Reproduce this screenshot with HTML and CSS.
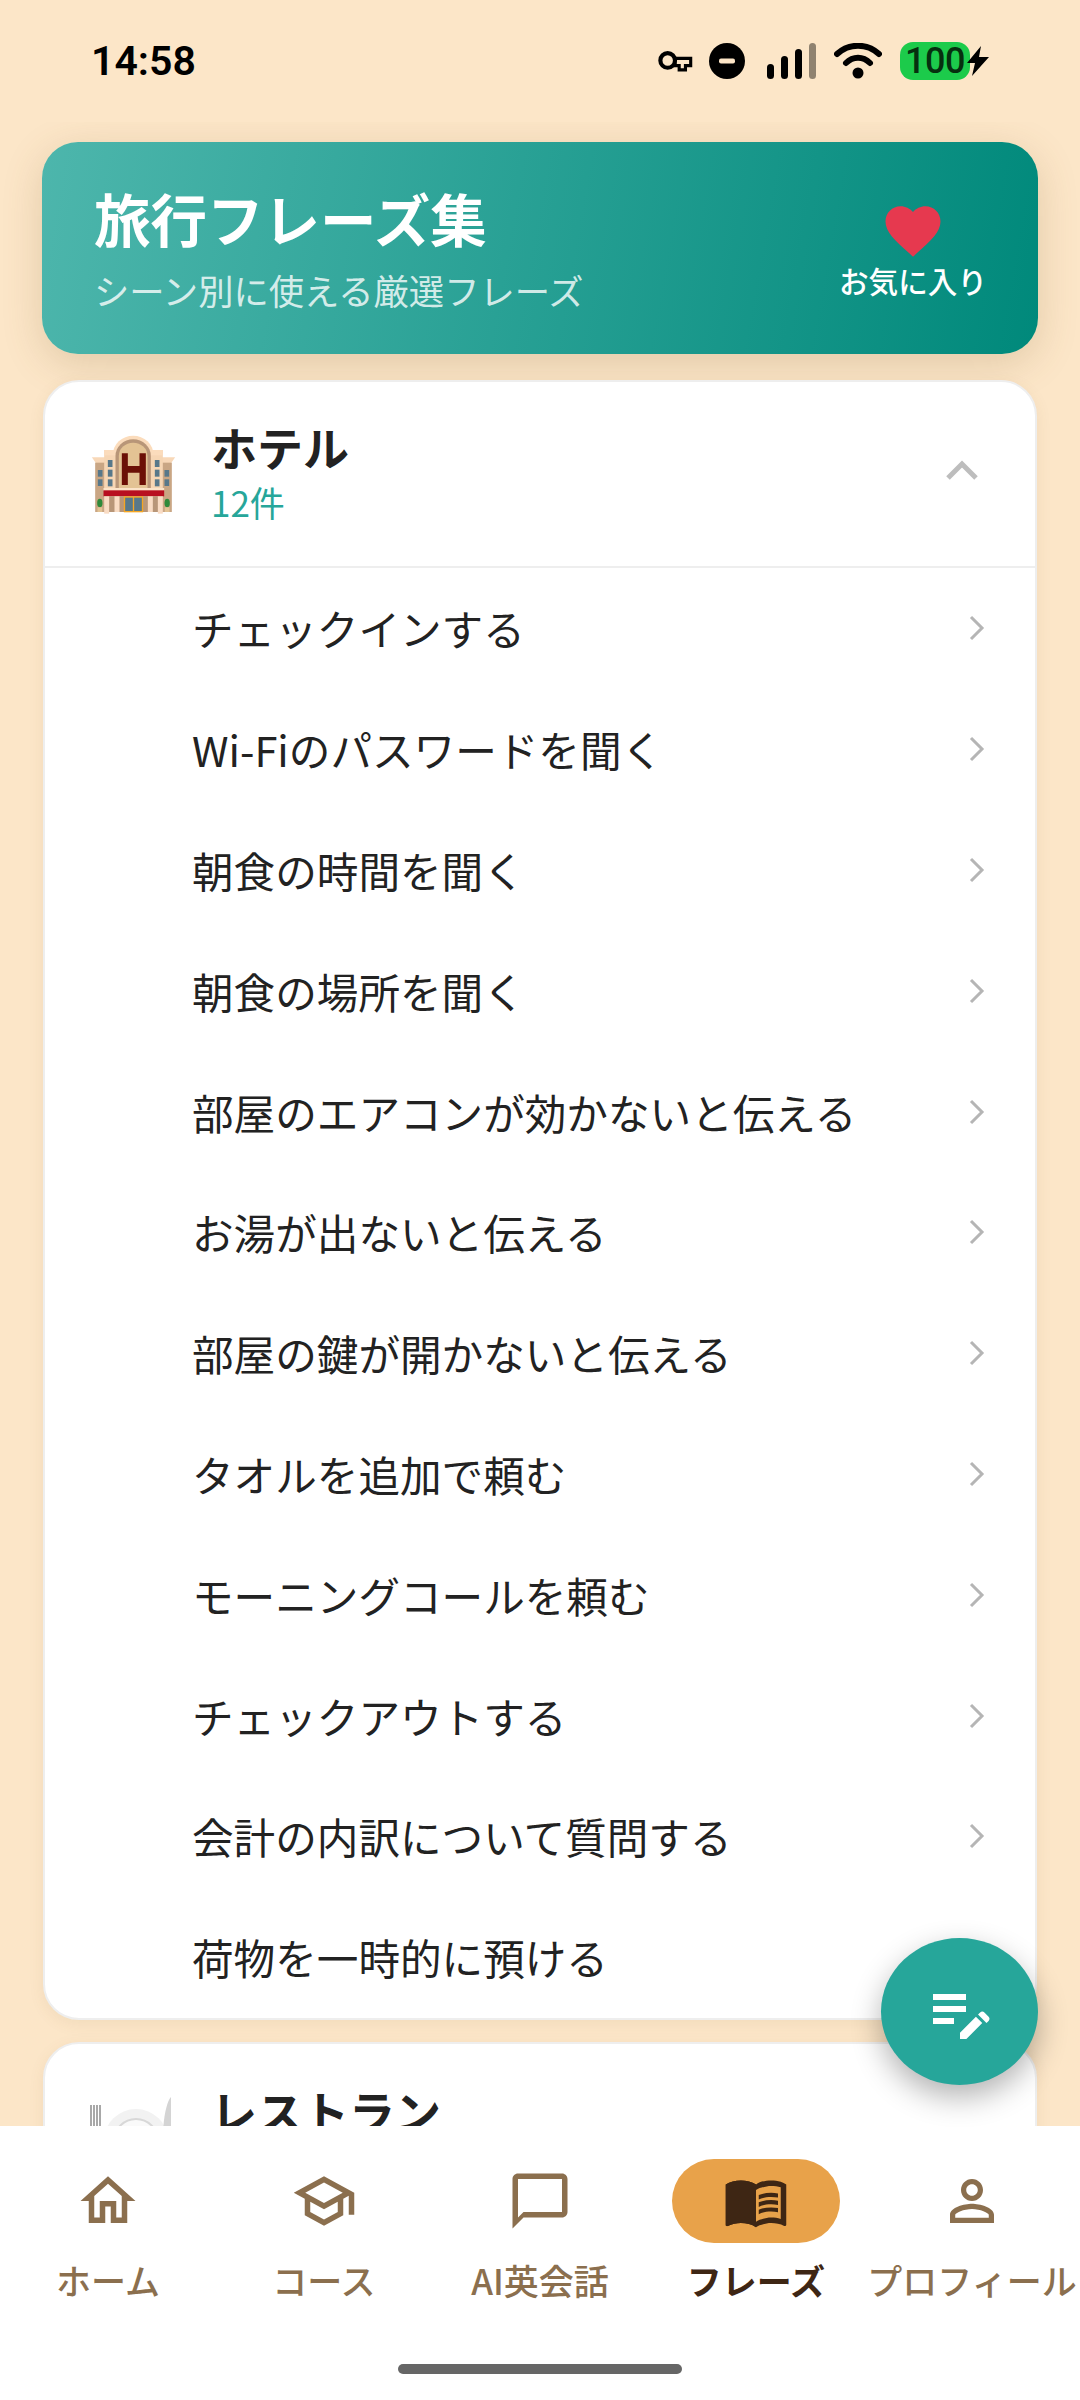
FILE: index.html
```html
<!DOCTYPE html>
<html lang="ja">
<head>
  <meta charset="utf-8">
  <title>旅行フレーズ集</title>
  <link rel="stylesheet" href="styles.css">
</head>
<body>
<div class="app">

  <div class="status-bar">
    <span class="clock">14:58</span>
    <div class="status-icons">
      <svg class="st-key" viewBox="0 0 34 22" width="36" height="23"><circle cx="10" cy="10" r="7" fill="none" stroke="#000" stroke-width="4"/><path d="M17 8h15v7h-5v4h-6v-4h-4z" fill="none" stroke="#000" stroke-width="3"/></svg>
      <svg class="st-dnd" viewBox="0 0 36 36" width="36" height="36"><circle cx="18" cy="18" r="18" fill="#000"/><rect x="10" y="15.5" width="16" height="5" rx="2" fill="#fde6c8"/></svg>
      <svg class="st-signal" viewBox="0 0 49 36" width="49" height="36"><rect x="0" y="21" width="7" height="15" rx="3.5" fill="#000"/><rect x="14" y="13" width="7" height="23" rx="3.5" fill="#000"/><rect x="28" y="6" width="7" height="30" rx="3.5" fill="#000"/><rect x="42" y="0" width="7" height="36" rx="3.5" fill="#8f8270"/></svg>
      <svg class="st-wifi" viewBox="0 0 48 36" width="48" height="36"><path d="M3 11C15 0 33 0 45 11" fill="none" stroke="#000" stroke-width="6" stroke-linecap="round"/><path d="M12 20C19 13 29 13 36 20" fill="none" stroke="#000" stroke-width="6" stroke-linecap="round"/><circle cx="24" cy="30" r="5.5" fill="#000"/></svg>
      <div class="battery">
        <span class="battery-level">100</span>
        <svg class="st-bolt" viewBox="0 0 24 30" width="24" height="30"><path d="M15 0L1 17h8l-3 13 17-19h-10z" fill="#000"/></svg>
      </div>
    </div>
  </div>

  <main class="content">
    <section class="banner">
      <div>
        <h1 class="banner-title">旅行フレーズ集</h1>
        <p class="banner-sub">シーン別に使える厳選フレーズ</p>
      </div>
      <div class="favorite">
        <svg viewBox="0 0 24 24" width="66" height="66"><path d="M12 21.35l-1.45-1.32C5.4 15.36 2 12.28 2 8.5 2 5.42 4.42 3 7.5 3c1.74 0 3.41.81 4.5 2.09C13.09 3.81 14.76 3 16.5 3 19.58 3 22 5.42 22 8.5c0 3.78-3.4 6.86-8.55 11.54L12 21.35z" fill="#e6394f"/></svg>
        <span>お気に入り</span>
      </div>
    </section>

    <section class="card">
      <div class="card-head">
        <svg class="emoji" viewBox="90 75 260 240" width="87" height="80">
          <path d="M95 142h40v20h-26z" fill="#f8d8b8"/>
          <path d="M345 142h-40v20h26z" fill="#f8d8b8"/>
          <rect x="105" y="158" width="30" height="148" fill="#c9a684"/>
          <rect x="305" y="158" width="30" height="148" fill="#c9a684"/>
          <rect x="132" y="120" width="176" height="186" fill="#f6d6b4"/>
          <path d="M158 135a61 58 0 0 1 122 0z" fill="#fbdcbc"/>
          <rect x="132" y="120" width="176" height="16" fill="#fbdcbc"/>
          <path d="M166 236V138a53 50 0 0 1 106 0V236z" fill="#b89678"/>
          <path d="M176 236V138a43 40 0 0 1 86 0V236z" fill="#e3c394"/>
          <path d="M185 130h18v38h35v-38h19v95h-19v-37h-35v37h-18z" fill="#6b1006"/>
          <g fill="#58788a">
            <rect x="143" y="150" width="14" height="21"/><rect x="143" y="179" width="14" height="21"/><rect x="143" y="208" width="14" height="21"/>
            <rect x="284" y="150" width="14" height="21"/><rect x="284" y="179" width="14" height="21"/><rect x="284" y="208" width="14" height="21"/>
            <rect x="113" y="180" width="14" height="20"/><rect x="113" y="208" width="14" height="20"/>
            <rect x="313" y="180" width="14" height="20"/><rect x="313" y="208" width="14" height="20"/>
          </g>
          <rect x="130" y="234" width="182" height="8" fill="#fbe3c8"/>
          <rect x="130" y="241" width="182" height="18" fill="#b80f20"/>
          <rect x="132" y="259" width="176" height="47" fill="#b89678"/>
          <g fill="#f9dcc4">
            <rect x="132" y="259" width="15" height="52"/><rect x="163" y="259" width="15" height="47"/><rect x="263" y="259" width="15" height="47"/><rect x="293" y="259" width="15" height="52"/>
          </g>
          <rect x="193" y="261" width="54" height="44" fill="#58788a" stroke="#f5a623" stroke-width="4"/>
          <rect x="218" y="261" width="4" height="44" fill="#f5a623"/>
          <ellipse cx="119" cy="279" rx="8" ry="13" fill="#2f8a3a"/>
          <ellipse cx="321" cy="279" rx="8" ry="13" fill="#2f8a3a"/>
          <rect x="112" y="292" width="14" height="14" fill="#e3c394"/>
          <rect x="314" y="292" width="14" height="14" fill="#e3c394"/>
        </svg>
        <div class="card-head-text">
          <div class="card-title">ホテル</div>
          <div class="card-count">12件</div>
        </div>
        <svg class="chevron-up" viewBox="0 0 34 22" width="34" height="22"><path d="M3 19L17 5l14 14" fill="none" stroke="#bdbdbd" stroke-width="5"/></svg>
      </div>
      <ul class="phrase-list">
        <li class="phrase">チェックインする<svg viewBox="0 0 18 28" width="18" height="28"><path d="M3 3l11 11L3 25" fill="none" stroke="#b5b5b5" stroke-width="3"/></svg></li>
        <li class="phrase">Wi-Fiのパスワードを聞く<svg viewBox="0 0 18 28" width="18" height="28"><path d="M3 3l11 11L3 25" fill="none" stroke="#b5b5b5" stroke-width="3"/></svg></li>
        <li class="phrase">朝食の時間を聞く<svg viewBox="0 0 18 28" width="18" height="28"><path d="M3 3l11 11L3 25" fill="none" stroke="#b5b5b5" stroke-width="3"/></svg></li>
        <li class="phrase">朝食の場所を聞く<svg viewBox="0 0 18 28" width="18" height="28"><path d="M3 3l11 11L3 25" fill="none" stroke="#b5b5b5" stroke-width="3"/></svg></li>
        <li class="phrase">部屋のエアコンが効かないと伝える<svg viewBox="0 0 18 28" width="18" height="28"><path d="M3 3l11 11L3 25" fill="none" stroke="#b5b5b5" stroke-width="3"/></svg></li>
        <li class="phrase">お湯が出ないと伝える<svg viewBox="0 0 18 28" width="18" height="28"><path d="M3 3l11 11L3 25" fill="none" stroke="#b5b5b5" stroke-width="3"/></svg></li>
        <li class="phrase">部屋の鍵が開かないと伝える<svg viewBox="0 0 18 28" width="18" height="28"><path d="M3 3l11 11L3 25" fill="none" stroke="#b5b5b5" stroke-width="3"/></svg></li>
        <li class="phrase">タオルを追加で頼む<svg viewBox="0 0 18 28" width="18" height="28"><path d="M3 3l11 11L3 25" fill="none" stroke="#b5b5b5" stroke-width="3"/></svg></li>
        <li class="phrase">モーニングコールを頼む<svg viewBox="0 0 18 28" width="18" height="28"><path d="M3 3l11 11L3 25" fill="none" stroke="#b5b5b5" stroke-width="3"/></svg></li>
        <li class="phrase">チェックアウトする<svg viewBox="0 0 18 28" width="18" height="28"><path d="M3 3l11 11L3 25" fill="none" stroke="#b5b5b5" stroke-width="3"/></svg></li>
        <li class="phrase">会計の内訳について質問する<svg viewBox="0 0 18 28" width="18" height="28"><path d="M3 3l11 11L3 25" fill="none" stroke="#b5b5b5" stroke-width="3"/></svg></li>
        <li class="phrase">荷物を一時的に預ける</li>
      </ul>
    </section>

    <section class="card">
      <div class="card-head">
        <svg class="emoji" viewBox="0 0 87 80" width="87" height="80">
          <g fill="#a8a8a8"><rect x="0" y="8" width="2" height="40"/><rect x="3" y="8" width="2" height="40"/><rect x="6" y="8" width="2" height="40"/><rect x="9" y="8" width="2" height="40"/></g>
          <circle cx="46" cy="44" r="32" fill="#f2f2f2"/>
          <circle cx="46" cy="44" r="22" fill="#fafafa" stroke="#d8d8d8" stroke-width="2"/>
          <path d="M73 40C73 20 77 4 81 0V50h-8z" fill="#d4d4d4"/>
        </svg>
        <div class="card-head-text">
          <div class="card-title low">レストラン</div>
          <div class="card-count"></div>
        </div>
      </div>
    </section>
  </main>

  <button class="fab">
    <svg viewBox="0 0 24 24" width="72" height="72"><path d="M3 10h11v2H3zm0-2h11V6H3zm0 8h7v-2H3zm15.01-3.13l.71-.71c.39-.39 1.02-.39 1.41 0l1.41 1.41c.39.39.39 1.02 0 1.41l-.71.71-2.82-2.82zm-.71.71l-5.3 5.3V21h2.12l5.3-5.3-2.12-2.12z" fill="#fff"/></svg>
  </button>

  <nav class="bottom-nav">
    <div class="nav-items">
      <div class="nav-item">
        <div class="nav-pill"><svg viewBox="0 0 24 24" width="66" height="66"><path d="M12 5.69l5 4.5V18h-2v-6H9v6H7v-7.81l5-4.5M12 3L2 12h3v8h6v-6h2v6h6v-8h3L12 3z"/></svg></div>
        <span>ホーム</span>
      </div>
      <div class="nav-item">
        <div class="nav-pill"><svg viewBox="0 0 24 24" width="66" height="66"><path d="M12 3L1 9l4 2.18v6L12 21l7-3.82v-6l2-1.09V17h2V9L12 3zm6.82 6L12 12.72 5.18 9 12 5.28 18.82 9zM17 15.99l-5 2.73-5-2.73v-3.72L12 15l5-2.73v3.72z"/></svg></div>
        <span>コース</span>
      </div>
      <div class="nav-item">
        <div class="nav-pill"><svg viewBox="0 0 24 24" width="66" height="66"><path d="M20 2H4c-1.1 0-2 .9-2 2v18l4-4h14c1.1 0 2-.9 2-2V4c0-1.1-.9-2-2-2zm0 14H6l-2 2V4h16v12z"/></svg></div>
        <span>AI英会話</span>
      </div>
      <div class="nav-item active">
        <div class="nav-pill"><svg viewBox="0 0 24 24" width="66" height="66"><path d="M21 5c-1.11-.35-2.33-.5-3.5-.5-1.95 0-4.05.4-5.5 1.5-1.45-1.1-3.55-1.5-5.5-1.5S2.45 4.9 1 6v14.65c0 .25.25.5.5.5.1 0 .15-.05.25-.05C3.1 20.45 5.05 20 6.5 20c1.95 0 4.05.4 5.5 1.5 1.35-.85 3.8-1.5 5.5-1.5 1.65 0 3.35.3 4.75 1.05.1.05.15.05.25.05.25 0 .5-.25.5-.5V6c-.6-.45-1.25-.75-2-1zm0 13.5c-1.1-.35-2.3-.5-3.5-.5-1.7 0-4.15.65-5.5 1.5V8c1.35-.85 3.8-1.5 5.5-1.5 1.2 0 2.4.15 3.5.5v11.5z"/><path d="M17.5 10.5c.88 0 1.73.09 2.5.26V9.24c-.79-.15-1.64-.24-2.5-.24-1.7 0-3.24.29-4.5.83v1.66c1.13-.64 2.7-.99 4.5-.99zM13 12.49v1.66c1.13-.64 2.7-.99 4.5-.99.88 0 1.73.09 2.5.26V11.9c-.79-.15-1.64-.24-2.5-.24-1.7 0-3.24.3-4.5.83zM17.5 14.33c-1.7 0-3.24.29-4.5.83v1.66c1.13-.64 2.7-.99 4.5-.99.88 0 1.73.09 2.5.26v-1.52c-.79-.16-1.64-.24-2.5-.24z"/><path d="M1 6c1.45-1.1 3.55-1.5 5.5-1.5S10.55 4.9 12 6v15.5c-1.45-1.1-3.55-1.5-5.5-1.5-1.45 0-3.4.45-4.75 1.1L1 21z"/></svg></div>
        <span>フレーズ</span>
      </div>
      <div class="nav-item">
        <div class="nav-pill"><svg viewBox="0 0 24 24" width="66" height="66"><path d="M12 5.9c1.16 0 2.1.94 2.1 2.1s-.94 2.1-2.1 2.1S9.9 9.16 9.9 8s.94-2.1 2.1-2.1m0 9c2.97 0 6.1 1.46 6.1 2.1v1.1H5.9V17c0-.64 3.13-2.1 6.1-2.1M12 4C9.79 4 8 5.79 8 8s1.79 4 4 4 4-1.79 4-4-1.79-4-4-4zm0 9c-2.67 0-8 1.34-8 4v3h16v-3c0-2.66-5.33-4-8-4z"/></svg></div>
        <span>プロフィール</span>
      </div>
    </div>
    <div class="home-bar"></div>
  </nav>

</div>
</body>
</html>
```

FILE: styles.css
```css
* {
  box-sizing: border-box;
}

body {
  margin: 0;
  font-family: "Noto Sans CJK JP", "Noto Sans", sans-serif;
  color: #222;
}

.app {
  position: relative;
  width: 1080px;
  height: 2400px;
  display: flex;
  flex-direction: column;
  background: #fce6c8;
  overflow: hidden;
}

/* Status bar */
.status-bar {
  flex: none;
  height: 122px;
  padding: 0 92px;
  display: flex;
  justify-content: space-between;
  align-items: center;
}

.clock {
  margin-left: -1px;
  font-family: Roboto, sans-serif;
  font-size: 41px;
  font-weight: 600;
  color: #000;
}

.status-icons {
  display: flex;
  align-items: center;
}

.st-key {
  margin-right: 16px;
}

.st-signal {
  margin: 0 18px 0 22px;
}

.battery {
  position: relative;
  width: 70px;
  height: 38px;
  margin-left: 18px;
  margin-right: 18px;
  background: #1ccb4b;
  border-radius: 13px;
  display: flex;
  align-items: center;
}

.battery-level {
  margin-left: 5px;
  font-family: Roboto, sans-serif;
  font-size: 36px;
  font-weight: 500;
  letter-spacing: -0.5px;
  color: #06300f;
}

.st-bolt {
  position: absolute;
  right: -20px;
  top: 4px;
}

/* Scrolling page */
.content {
  flex: 1;
  min-height: 0;
  padding: 20px 42px 0;
  overflow: hidden;
}

.banner {
  height: 212px;
  padding: 0 52px;
  display: flex;
  justify-content: space-between;
  align-items: center;
  border-radius: 36px;
  background: linear-gradient(100deg, #4db6ac, #00897b);
  box-shadow: 0 10px 40px rgba(120, 90, 40, 0.2);
  color: #fff;
}

.banner-title {
  margin: 0;
  font-size: 56.5px;
  font-weight: 700;
  line-height: 76px;
  position: relative;
  top: -3px;
}

.banner-sub {
  margin: 8px 0 0;
  font-size: 35.3px;
  line-height: 48px;
  color: rgba(255, 255, 255, 0.8);
}

.favorite {
  margin-right: -1px;
  padding-top: 4px;
  display: flex;
  flex-direction: column;
  align-items: center;
  font-size: 29.6px;
  font-weight: 500;
}

.favorite span {
  line-height: 42px;
  margin-top: -4px;
}

.card {
  margin: 26px 1px 0;
  background: #fff;
  border: 2px solid #eeeeee;
  border-radius: 36px;
  box-shadow: 0 4px 16px rgba(120, 90, 40, 0.08);
}

.card + .card {
  margin-top: 22px;
}

.card-head {
  height: 184px;
  padding: 0 56px 0 45px;
  display: flex;
  align-items: center;
}

.emoji {
  flex: none;
  margin-top: 2px;
}

.card-head-text {
  flex: 1;
  margin-left: 34px;
  padding-bottom: 4px;
}

.card-title {
  font-size: 46px;
  font-weight: 700;
  line-height: 60px;
  color: #222;
}

.card-title.low {
  padding-top: 4px;
}

.card-count {
  min-height: 52px;
  font-size: 35px;
  line-height: 52px;
  color: #26a69a;
}

.chevron-up {
  margin-top: -8px;
}

.phrase-list {
  margin: 0;
  padding: 0;
  list-style: none;
  border-top: 2px solid #eeeeee;
}

.phrase {
  height: 120.8px;
  padding: 0 49px 0 147px;
  display: flex;
  justify-content: space-between;
  align-items: center;
  font-size: 41.6px;
  color: #222;
}

/* Floating button */
.fab {
  position: absolute;
  left: 881px;
  top: 1938px;
  width: 157px;
  height: 147px;
  padding: 0;
  border: none;
  border-radius: 50%;
  background: #26a69a;
  box-shadow: 0 12px 30px rgba(0, 0, 0, 0.3);
  display: flex;
  justify-content: center;
  align-items: center;
}

/* Bottom nav */
.bottom-nav {
  flex: none;
  height: 274px;
  padding-top: 33px;
  background: #fff;
  display: flex;
  flex-direction: column;
  align-items: center;
}

.nav-items {
  align-self: stretch;
  display: grid;
  grid-template-columns: repeat(5, 216px);
}

.nav-item {
  display: flex;
  flex-direction: column;
  align-items: center;
  font-size: 35px;
  font-weight: 500;
  line-height: 48px;
  color: #8b6f4e;
  white-space: nowrap;
}

.nav-pill {
  width: 168px;
  height: 84px;
  margin-bottom: 13px;
  border-radius: 42px;
  display: flex;
  justify-content: center;
  align-items: center;
}

.nav-pill svg {
  fill: #8b6f4e;
}

.nav-item.active {
  font-weight: 700;
  color: #3e2614;
}

.nav-item.active .nav-pill {
  background: #e8a24a;
}

.nav-item.active .nav-pill svg {
  fill: #3e2614;
}

.home-bar {
  width: 284px;
  height: 10px;
  margin-top: auto;
  margin-bottom: 26px;
  border-radius: 5px;
  background: #666;
}
```
